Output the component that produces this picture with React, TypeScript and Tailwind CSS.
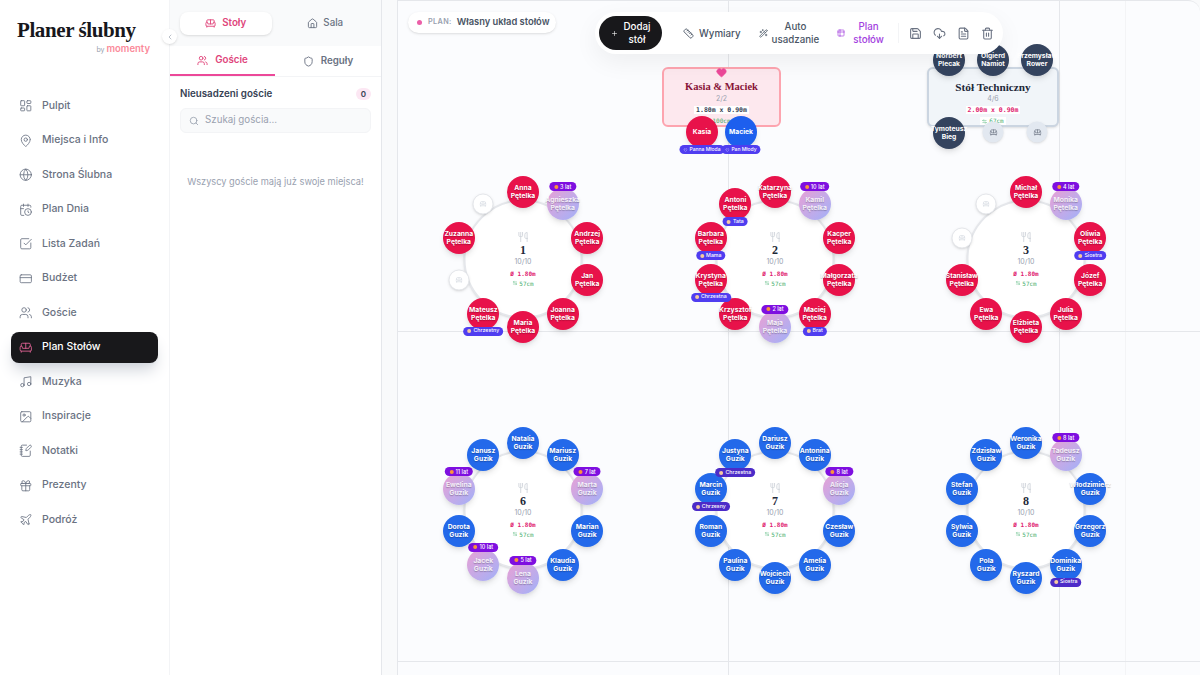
import {
  LayoutDashboard, MapPin, Globe, CalendarClock, SquareCheckBig, CreditCard, Users, Sofa, Music, Image,
  NotebookPen, Gift, Plane, ChevronLeft, House, Shield, Search, Plus, Ruler, WandSparkles, Table2, Save,
  CloudDownload, FileText, Trash2, Utensils, Heart, ArrowLeftRight,
} from "lucide-react";

const NAV = [
  { label: "Pulpit", icon: LayoutDashboard },
  { label: "Miejsca i Info", icon: MapPin },
  { label: "Strona Ślubna", icon: Globe },
  { label: "Plan Dnia", icon: CalendarClock },
  { label: "Lista Zadań", icon: SquareCheckBig },
  { label: "Budżet", icon: CreditCard },
  { label: "Goście", icon: Users },
  { label: "Plan Stołów", icon: Sofa, active: true },
  { label: "Muzyka", icon: Music },
  { label: "Inspiracje", icon: Image },
  { label: "Notatki", icon: NotebookPen },
  { label: "Prezenty", icon: Gift },
  { label: "Podróż", icon: Plane },
];

type Seat = { n?: string; age?: string; rel?: string };

const p = (first: string, rel?: string): Seat => ({ n: first + " Pętelka", rel });
const g = (first: string, rel?: string): Seat => ({ n: first + " Guzik", rel });
const pk = (first: string, age: string): Seat => ({ n: first + " Pętelka", age });
const gk = (first: string, age: string): Seat => ({ n: first + " Guzik", age });

const TABLES: { id: string; x: number; y: number; seats: Seat[]; tone: "red" | "blue" }[] = [
  { id: "1", x: 523, y: 259, tone: "red", seats: [p("Anna"), pk("Agnieszka", "3 lat"), p("Andrzej"), p("Jan"), p("Joanna"), p("Maria"), p("Mateusz", "Chrzestny"), {}, p("Zuzanna"), {}] },
  { id: "2", x: 775, y: 259, tone: "red", seats: [p("Katarzyna"), pk("Kamil", "10 lat"), p("Kacper"), p("Małgorzata"), p("Maciej", "Brat"), pk("Maja", "2 lat"), p("Krzysztof"), p("Krystyna", "Chrzestna"), p("Barbara", "Mama"), p("Antoni", "Tata")] },
  { id: "3", x: 1026, y: 259, tone: "red", seats: [p("Michał"), pk("Monika", "4 lat"), p("Oliwia", "Siostra"), p("Józef"), p("Julia"), p("Elżbieta"), p("Ewa"), p("Stanisław"), {}, {}] },
  { id: "6", x: 523, y: 510, tone: "blue", seats: [g("Natalia"), g("Mariusz"), gk("Marta", "7 lat"), g("Marian"), g("Klaudia"), gk("Lena", "5 lat"), gk("Jacek", "10 lat"), g("Dorota"), gk("Ewelina", "11 lat"), g("Janusz")] },
  { id: "7", x: 775, y: 510, tone: "blue", seats: [g("Dariusz"), g("Antonina"), gk("Alicja", "8 lat"), g("Czesław"), g("Amelia"), g("Wojciech"), g("Paulina"), g("Roman"), g("Marcin", "Chrzesny"), g("Justyna", "Chrzestna")] },
  { id: "8", x: 1026, y: 510, tone: "blue", seats: [g("Weronika"), gk("Tadeusz", "8 lat"), g("Włodzimierz"), g("Grzegorz"), g("Dominika", "Siostra"), g("Ryszard"), g("Pola"), g("Sylwia"), g("Stefan"), g("Zdzisław")] },
];

// canvas padding box starts at (398, 1) in the page
const OX = 398;
const OY = 1;
const SERIF = "font-['Liberation_Serif',serif]";
const MONO = "font-['DejaVu_Sans_Mono',monospace]";

function Badge({ label, kind, dark }: { label: string; kind: "age" | "rel"; dark?: boolean }) {
  return (
    <span
      className={`absolute left-1/2 -translate-x-1/2 flex items-center gap-[2px] whitespace-nowrap rounded-full h-[9px] font-medium text-white z-10 ${
        kind === "age"
          ? "-top-[6px] px-[5px] text-[5.5px] bg-[#7e0fe0]"
          : dark
            ? "-bottom-[6px] px-[4px] text-[5.25px] bg-[#4c2bc8]"
            : "-bottom-[6px] px-[4px] text-[5.25px] bg-[#4f3df0]"
      }`}
    >
      <span className={`w-[4px] h-[4px] rounded-full ${kind === "age" ? "bg-[#fb923c]" : "bg-[#f5c9a0]"}`} />
      {label}
    </span>
  );
}

function SeatDot({ seat, x, y, tone }: { seat: Seat; x: number; y: number; tone: "red" | "blue" }) {
  const pos = { left: x - OX, top: y - OY };
  if (!seat.n) {
    return (
      <div style={pos} className="absolute -translate-x-1/2 -translate-y-1/2 w-[21px] h-[21px] rounded-full bg-white border border-gray-200 shadow-sm flex items-center justify-center">
        <Sofa size={7} className="text-gray-300" />
      </div>
    );
  }
  const color = seat.age
    ? "bg-gradient-to-br from-[#e8a0d4] to-[#a0b0f8] text-white/85"
    : tone === "red"
      ? "bg-[#e8124a] text-white"
      : "bg-[#2369ea] text-white";
  return (
    <div style={pos} className={`absolute -translate-x-1/2 -translate-y-1/2 w-8 h-8 rounded-full shadow-md flex items-center justify-center text-center ${color}`}>
      <span className="text-[6.75px] leading-[8px] font-bold [text-shadow:0_1px_1px_rgba(0,0,0,0.25)]">
        {seat.n.split(" ").map((w) => (
          <span key={w} className="block whitespace-nowrap">{w}</span>
        ))}
      </span>
      {seat.age && <Badge label={seat.age} kind="age" />}
      {seat.rel && <Badge label={seat.rel} kind="rel" dark={tone === "blue"} />}
    </div>
  );
}

function RoundTable({ t }: { t: (typeof TABLES)[number] }) {
  return (
    <>
      <div
        style={{ left: t.x - OX, top: t.y - OY }}
        className="absolute -translate-x-1/2 -translate-y-1/2 w-[119px] h-[119px] rounded-full bg-white border-2 border-gray-200 shadow-sm flex flex-col items-center pt-[30px]"
      >
        <Utensils size={11} className="text-gray-300" />
        <span className={`${SERIF} text-[12px] leading-[12px] font-bold text-gray-800 mt-[1px] mb-[1px]`}>{t.id}</span>
        <span className="text-[7px] leading-[10px] text-gray-400">10/10</span>
        <span className={`${MONO} text-[6px] leading-[9px] font-bold text-[#e0246f] mt-[2px]`}>Ø 1.80m</span>
        <span className={`${MONO} text-[6px] leading-[9px] text-[#3fae6a] mt-[1px] flex items-center gap-[2px]`}>
          <ArrowLeftRight size={5} /> 57cm
        </span>
      </div>
      {t.seats.map((s, i) => {
        const a = (i * Math.PI) / 5;
        return <SeatDot key={i} seat={s} tone={t.tone} x={t.x + 67.5 * Math.sin(a)} y={t.y - 67.5 * Math.cos(a)} />;
      })}
    </>
  );
}

function FixedSeat({ name, x, y, cls, badge }: { name?: string; x: number; y: number; cls?: string; badge?: string }) {
  if (!name) {
    return (
      <div style={{ left: x - OX, top: y - OY }} className="absolute -translate-x-1/2 -translate-y-1/2 w-[21px] h-[21px] rounded-full bg-[#e2e8f0] flex items-center justify-center shadow-sm">
        <Sofa size={8} className="text-gray-500" />
      </div>
    );
  }
  return (
    <div style={{ left: x - OX, top: y - OY }} className={`absolute -translate-x-1/2 -translate-y-1/2 w-8 h-8 rounded-full shadow-md flex items-center justify-center text-center text-white ${cls}`}>
      <span className="text-[6.75px] leading-[8px] font-bold">
        {name.split(" ").map((w) => (
          <span key={w} className="block whitespace-nowrap">{w}</span>
        ))}
      </span>
      {badge && (
        <span className="absolute left-1/2 -translate-x-1/2 -bottom-[6px] flex items-center gap-[2px] whitespace-nowrap rounded-full px-[4px] h-[9px] text-[5px] font-medium text-white bg-[#4f3df0]">
          <Heart size={4} />
          {badge}
        </span>
      )}
    </div>
  );
}

export default function App() {
  return (
    <div className="flex w-[1200px] h-[675px] overflow-hidden bg-[#f9fafb] font-['Inter',sans-serif] text-gray-700">
      {/* Main sidebar */}
      <aside className="relative w-[170px] shrink-0 bg-white border-r border-gray-100 flex flex-col">
        <div className="h-[90px] pl-[17px] pt-[17px]">
          <div className={`${SERIF} text-[21px] leading-[26px] font-bold tracking-[-0.4px] text-[#17171c]`}>Planer ślubny</div>
          <div className="w-[133px] text-right text-[7px] leading-[11px] text-gray-400">
            by <span className="text-[9.5px] font-semibold text-[#fb8a9a]">momenty</span>
          </div>
        </div>
        <nav className="flex flex-col gap-[3px] px-[11px]">
          {NAV.map(({ label, icon: Icon, active }) => (
            <div
              key={label}
              className={`h-[31.5px] flex items-center gap-[10px] pl-[7.5px] rounded-lg text-[10.5px] font-medium ${
                active ? "bg-[#18181b] text-white shadow-lg shadow-gray-300" : "text-gray-500"
              }`}
            >
              <Icon size={13.5} strokeWidth={1.5} className={active ? "text-[#e8669a]" : "text-gray-500"} />
              {label}
            </div>
          ))}
        </nav>
        <button className="absolute -right-[8px] top-[29px] z-10 w-[15px] h-[15px] rounded-full bg-white shadow flex items-center justify-center text-gray-400">
          <ChevronLeft size={8} />
        </button>
      </aside>

      {/* Guests panel */}
      <section className="w-[212px] shrink-0 bg-white border-r border-gray-200 flex flex-col">
        <div className="h-[46px] bg-[#f9fafb] flex items-center px-[10px] gap-[8px]">
          <div className="w-[93px] h-[23px] rounded-lg bg-white shadow-sm flex items-center justify-center gap-[6px] text-[9.75px] font-semibold text-[#e0457b]">
            <Sofa size={11} /> Stoły
          </div>
          <div className="w-[93px] h-[23px] flex items-center justify-center gap-[5px] text-[9.75px] font-medium text-gray-500">
            <House size={11} /> Sala
          </div>
        </div>
        <div className="h-[31px] flex border-b border-gray-100 text-[9.75px] font-semibold">
          <div className="w-[105px] flex items-center justify-center gap-[7px] border-b-2 border-[#ec4899] text-[#e0457b]">
            <Users size={11} /> Goście
          </div>
          <div className="flex-1 flex items-center justify-center gap-[7px] text-gray-500">
            <Shield size={11} /> Reguły
          </div>
        </div>
        <div className="px-[10px] pt-[11px]">
          <div className="flex items-center justify-between h-[12px]">
            <span className="text-[9.75px] font-semibold text-gray-700">Nieusadzeni goście</span>
            <span className="w-[15px] h-[12px] rounded-md bg-pink-100 text-[8px] font-semibold flex items-center justify-center">0</span>
          </div>
          <div className="mt-[8px] h-[25px] rounded-md bg-[#f9fafb] border border-gray-100 flex items-center gap-[6px] pl-[8px] text-[9.75px] text-gray-400">
            <Search size={10} /> Szukaj gościa...
          </div>
          <p className="mt-[42px] text-center text-[9.25px] text-gray-400">Wszyscy goście mają już swoje miejsca!</p>
        </div>
      </section>

      {/* Canvas */}
      <main className="flex-1 pl-[15px]">
        <div className="relative h-full overflow-hidden rounded-tr-xl bg-[#fbfcfe] border-l border-t border-gray-200 text-[10px]">
          {[728, 1059, 1125].map((x) => (
            <div key={x} style={{ left: x - OX }} className={`absolute top-0 bottom-0 w-px ${x === 1125 ? "bg-gray-100" : "bg-gray-200"}`} />
          ))}
          {[331, 661].map((y) => (
            <div key={y} style={{ top: y - OY }} className="absolute left-0 right-0 h-px bg-gray-200" />
          ))}

          {/* Head table */}
          <div className="absolute left-[264px] top-[66px] w-[119px] h-[60px] rounded-md bg-[#fde8ee] border-2 border-[#fda4af] flex flex-col items-center">
            <Heart size={11} className="absolute -top-[2px] text-[#ec4899] fill-[#ec4899]" />
            <span className={`${SERIF} mt-[11px] text-[10.5px] leading-[14px] font-bold text-[#881337]`}>Kasia &amp; Maciek</span>
            <span className="text-[7px] leading-[9px] text-gray-400">2/2</span>
            <span className={`${MONO} mt-[3px] px-[2px] bg-white text-[6.5px] leading-[8px] font-bold text-gray-700`}>1.80m x 0.90m</span>
            <span className={`${MONO} mt-[3px] text-[6px] leading-[8px] text-[#3fae6a]`}>100cm</span>
          </div>
          <FixedSeat name="Kasia" x={702} y={132} cls="bg-[#e8124a]" badge="Panna Młoda" />
          <FixedSeat name="Maciek" x={741} y={132} cls="bg-[#1d5fee]" badge="Pan Młody" />

          {/* Tech table */}
          <div className="absolute left-[529px] top-[66px] w-[132px] h-[60px] rounded-md bg-[#f1f5f9] border-2 border-[#cbd5e1] shadow-sm flex flex-col items-center">
            <span className={`${SERIF} mt-[11px] text-[11.25px] leading-[14px] font-bold text-gray-800`}>Stół Techniczny</span>
            <span className="text-[7px] leading-[9px] text-gray-400">4/6</span>
            <span className={`${MONO} mt-[3px] px-[2px] bg-white text-[6.5px] leading-[8px] font-bold text-[#e0246f]`}>2.00m x 0.90m</span>
            <span className={`${MONO} mt-[3px] px-[2px] bg-white text-[6px] leading-[8px] text-[#3fae6a] flex items-center gap-[2px]`}>
              <ArrowLeftRight size={5} /> 67cm
            </span>
          </div>
          <FixedSeat name="Norbert Plecak" x={949} y={60} cls="bg-[#34435e]" />
          <FixedSeat name="Olgierd Namiot" x={993} y={60} cls="bg-[#34435e]" />
          <FixedSeat name="Przemysław Rower" x={1037} y={60} cls="bg-[#34435e]" />
          <FixedSeat name="Tymoteusz Bieg" x={949} y={133} cls="bg-[#34435e]" />
          <FixedSeat x={993} y={132} />
          <FixedSeat x={1037} y={132} />

          {TABLES.map((t) => (
            <RoundTable key={t.id} t={t} />
          ))}

          {/* Plan label */}
          <div className="absolute left-[10px] top-[11px] h-[21px] w-[148px] rounded-full bg-white shadow-sm flex items-center pl-[9px] text-[9.35px] whitespace-nowrap">
            <span className="w-[5px] h-[5px] rounded-full bg-[#ec5fa8] mr-[6px]" />
            <span className="text-[7.25px] font-semibold tracking-wider text-gray-400 mr-[5px]">PLAN:</span>
            <span className="font-semibold text-gray-600">Własny układ stołów</span>
          </div>

          {/* Toolbar */}
          <div className="absolute left-[197px] top-[11px] h-[42px] w-[408px] rounded-[21px] bg-white shadow-[0_8px_24px_rgba(0,0,0,0.06)] flex items-center pl-[4px] text-[9.75px] font-medium leading-[13px] text-gray-600 z-20">
            <div className="w-[63px] h-[34px] rounded-full bg-[#18181b] text-white flex items-center justify-center gap-[6px] text-center">
              <Plus size={7} />
              <span>Dodaj<br />stół</span>
            </div>
            <div className="ml-[21px] flex items-center gap-[5px]">
              <Ruler size={11} /> Wymiary
            </div>
            <div className="ml-[18px] flex items-center gap-[4px] text-center">
              <WandSparkles size={9} />
              <span>Auto<br />usadzanie</span>
            </div>
            <div className="ml-[18px] flex items-center gap-[8px] text-center text-[#a33fe0]">
              <Table2 size={8} />
              <span>Plan<br />stołów</span>
            </div>
            <div className="ml-[14px] pl-[10px] h-[20px] border-l border-gray-100 flex items-center gap-[11px] text-gray-500">
              <Save size={13} />
              <CloudDownload size={13} />
              <FileText size={13} />
              <Trash2 size={13} />
            </div>
          </div>
        </div>
      </main>
    </div>
  );
}
